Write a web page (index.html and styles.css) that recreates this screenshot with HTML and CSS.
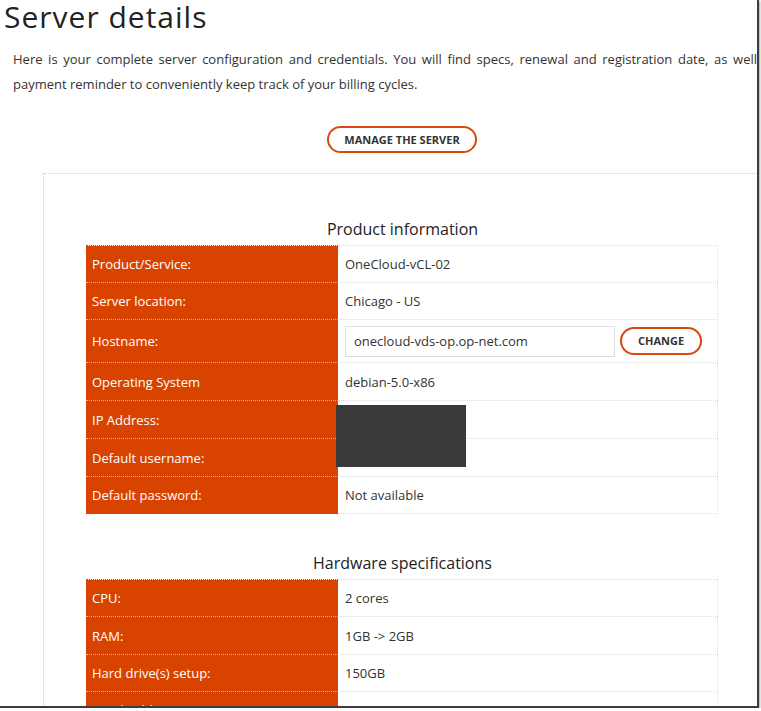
FILE: index.html
```html
<!DOCTYPE html>
<html lang="en">
<head>
<meta charset="utf-8">
<title>Server details</title>
<link rel="stylesheet" href="styles.css">
</head>
<body>
<div class="frame">
  <h1 class="title">Server details</h1>
  <p class="intro"><span class="line justify">Here is your complete server configuration and credentials. You will find specs, renewal and registration date, as well</span><span class="line">payment reminder to conveniently keep track of your billing cycles.</span></p>
  <div class="content">
    <div class="actions"><a class="pill-btn" href="#">MANAGE THE SERVER</a></div>
    <section class="card">
      <h2 class="section-title">Product information</h2>
      <div class="table-wrap">
        <table class="info">
          <tr><td class="label">Product/Service:</td><td class="value">OneCloud-vCL-02</td></tr>
          <tr><td class="label">Server location:</td><td class="value">Chicago - US</td></tr>
          <tr class="tall"><td class="label">Hostname:</td><td class="value"><div class="host-edit"><input class="host-input" type="text" value="onecloud-vds-op.op-net.com"><a class="pill-btn small" href="#">CHANGE</a></div></td></tr>
          <tr class="r38"><td class="label">Operating System</td><td class="value">debian-5.0-x86</td></tr>
          <tr class="r38"><td class="label">IP Address:</td><td class="value"></td></tr>
          <tr class="r38"><td class="label">Default username:</td><td class="value"></td></tr>
          <tr><td class="label">Default password:</td><td class="value">Not available</td></tr>
        </table>
        <div class="redact"></div>
      </div>
      <h2 class="section-title spaced">Hardware specifications</h2>
      <table class="info">
        <tr><td class="label">CPU:</td><td class="value">2 cores</td></tr>
        <tr class="r38"><td class="label">RAM:</td><td class="value">1GB -&gt; 2GB</td></tr>
        <tr><td class="label">Hard drive(s) setup:</td><td class="value">150GB</td></tr>
        <tr><td class="label">Bandwidth:</td><td class="value">3TB -&gt; 4TB</td></tr>
      </table>
    </section>
  </div>
</div>
</body>
</html>
```
FILE: styles.css
```css
* { box-sizing: border-box; }
body {
  margin: 0;
  background: #fff;
  font-family: "Open Sans", "DejaVu Sans", sans-serif;
  color: #333;
}
.frame {
  width: 759px;
  height: 708px;
  overflow: hidden;
  background: #fff;
  border-right: 2px solid #3c3c3c;
  border-bottom: 2px solid #3c3c3c;
  box-shadow: 1px 1px 2px rgba(0, 0, 0, 0.35);
}
.title {
  margin: 0;
  padding-left: 4px;
  font-size: 30px;
  line-height: 34px;
  font-weight: 400;
  letter-spacing: 1px;
  color: #222;
}
.intro {
  margin: 13px 0 0 13px;
  width: 744px;
  font-size: 13px;
  line-height: 25px;
  color: #333;
}
.line { display: block; white-space: nowrap; }
.line.justify { white-space: normal; text-align: justify; text-align-last: justify; }
.content {
  margin-left: 43px;
  width: 718px;
}
.actions {
  display: flex;
  justify-content: center;
  margin-top: 29px;
}
.pill-btn {
  display: inline-block;
  height: 27px;
  padding: 0 15px;
  border: 2px solid #d9480f;
  border-radius: 14px;
  font-size: 11px;
  font-weight: 700;
  line-height: 23px;
  color: #333;
  text-decoration: none;
  white-space: nowrap;
}
.pill-btn.small {
  width: 82px;
  height: 28px;
  padding: 0;
  text-align: center;
  line-height: 24px;
  margin-left: 5px;
}
.card {
  margin-top: 20px;
  border-top: 1px dotted #cfcfcf;
  border-left: 1px dotted #cfcfcf;
  padding: 44px 42px 0 42px;
}
.section-title {
  margin: 0 0 5px;
  font-size: 16px;
  line-height: 22px;
  font-weight: 400;
  text-align: center;
  color: #222;
}
.section-title.spaced { margin-top: 38px; }
.table-wrap { position: relative; }
.info {
  width: 632px;
  border-collapse: collapse;
  font-size: 13px;
}
.info td {
  height: 37px;
  padding: 0 7px;
  vertical-align: middle;
}
.info tr.r38 td { height: 38px; }
.info tr.tall td { height: 43px; }
.info .label {
  width: 252px;
  padding-left: 6px;
  background: #d94300;
  color: #fff;
  border-top: 1px dotted rgba(255, 255, 255, 0.55);
}
.info tr:first-child .label { border-top-color: #d94300; }
.info .value {
  border-top: 1px dotted #dcdcdc;
  border-right: 1px dotted #dcdcdc;
  border-bottom: 1px dotted #dcdcdc;
}
.host-edit {
  display: flex;
  align-items: center;
}
.host-input {
  width: 270px;
  height: 31px;
  margin: 0;
  padding: 0 8px;
  border: 1px solid #dedede;
  font-family: "Open Sans", "DejaVu Sans", sans-serif;
  font-size: 13px;
  color: #333;
  background: #fff;
}
.redact {
  position: absolute;
  left: 250px;
  top: 160px;
  width: 130px;
  height: 62px;
  background: #393939;
}
```
